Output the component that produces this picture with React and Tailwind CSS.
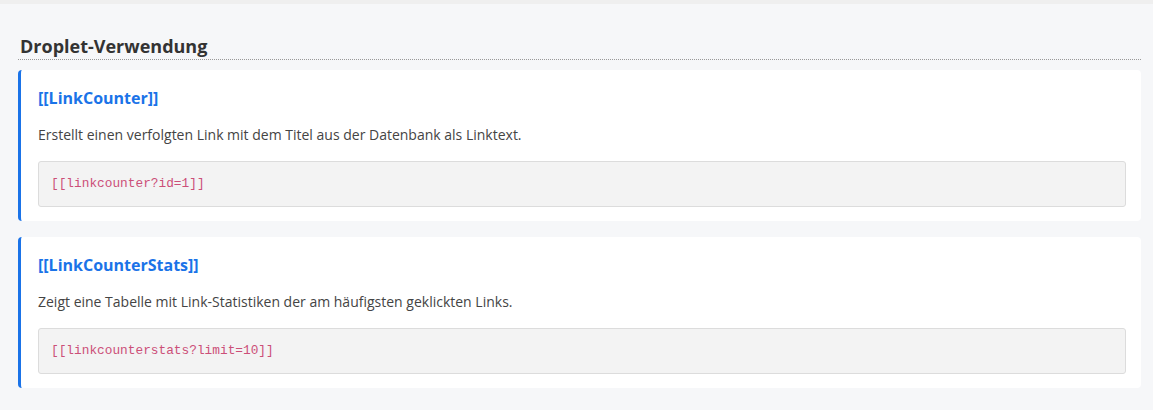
const droplets = [
  {
    name: "[[LinkCounter]]",
    text: "Erstellt einen verfolgten Link mit dem Titel aus der Datenbank als Linktext.",
    code: "[[linkcounter?id=1]]",
  },
  {
    name: "[[LinkCounterStats]]",
    text: "Zeigt eine Tabelle mit Link-Statistiken der am häufigsten geklickten Links.",
    code: "[[linkcounterstats?limit=10]]",
  },
];

function DropletCard({ item }) {
  return (
    <div className="bg-white rounded-[4px] border-l-[3px] border-[#1a73e8] pl-[17px] pr-[15px] pt-[16px] pb-[14px]">
      <h3 className="text-[16px] leading-[24px] font-bold text-[#1a73e8]">{item.name}</h3>
      <p className="mt-[15px] text-[14px] leading-[20px] text-[#444]">{item.text}</p>
      <pre className="mt-[16px] bg-[#f3f3f3] border border-[#dcdcdc] rounded-[3px] px-[12px] py-[12px] text-[12.8px] leading-[20px] text-[#cc4f78] font-['Liberation_Mono',monospace]">
        {item.code}
      </pre>
    </div>
  );
}

export default function App() {
  return (
    <div className="w-[1153px] h-[410px] bg-[#f6f7f9] font-['Open_Sans',sans-serif]">
      <div className="h-[4px] bg-[#efefef]" />
      <div className="pl-[18px] pr-[12px] pt-[29px]">
        <h2 className="text-[18px] leading-[26px] font-bold text-[#333] pl-[2px] border-b border-dotted border-[#999]">
          Droplet-Verwendung
        </h2>
        <div className="mt-[10px] flex flex-col gap-[16px]">
          {droplets.map((d) => (
            <DropletCard key={d.code} item={d} />
          ))}
        </div>
      </div>
    </div>
  );
}
